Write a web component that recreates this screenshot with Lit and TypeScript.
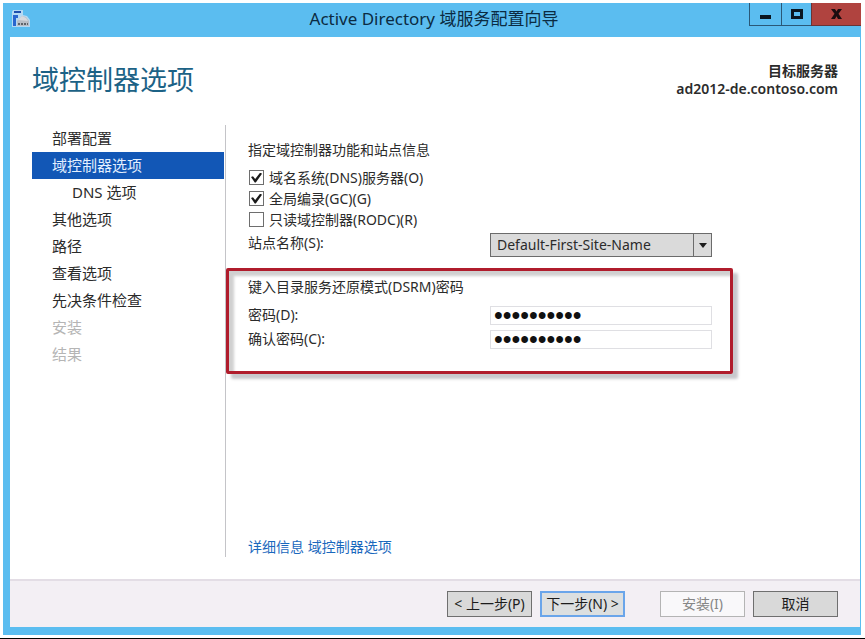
import { LitElement, html, css } from "lit";
import { customElement, property, state } from "lit/decorators.js";
import { classMap } from "lit/directives/class-map.js";

interface Step {
  label: string;
  sub?: boolean;
  current?: boolean;
  disabled?: boolean;
}

const STEPS: Step[] = [
  { label: "部署配置" },
  { label: "域控制器选项", current: true },
  { label: "DNS 选项", sub: true },
  { label: "其他选项" },
  { label: "路径" },
  { label: "查看选项" },
  { label: "先决条件检查" },
  { label: "安装", disabled: true },
  { label: "结果", disabled: true },
];

@customElement("window-bar")
class WindowBar extends LitElement {
  @property() caption = "";

  static styles = css`
    :host {
      display: grid;
      grid-template-columns: 116px 1fr 112px;
      height: 34px;
      background: #5bbdf0;
      color: #0b2b42;
    }
    .logo {
      margin: 6px 0 0 8px;
      width: 20px;
      height: 19px;
    }
    .caption {
      text-align: center;
      font-size: 17px;
      line-height: 32px;
      white-space: nowrap;
    }
    .controls {
      display: grid;
      grid-template-columns: 32px 30px 50px;
      height: 23px;
    }
    button {
      padding: 0;
      border: 0 solid #2a5877;
      border-width: 0 0 1px 1px;
      background: none;
    }
    button.close {
      background: #b0433f;
      border-color: #6a3436;
    }
    button svg {
      display: block;
      width: 16px;
      height: 14px;
      margin: 0 auto;
    }
  `;

  render() {
    return html`
      <svg class="logo" viewBox="0 0 20 19" aria-hidden="true">
        <path d="M2 1h10v5l4 1 3 4v7H1V3z" fill="#b5d9f3" />
        <path d="M3 2h7v2H3z" fill="#1d4fae" />
        <path d="M2 6h5v3H5v8H2z" fill="#2a66cf" />
        <path d="M6 12l5-5 4 1 3 4v5H6z" fill="#b9bec6" />
        <path d="M7 11l4-4 4 2 2 3z" fill="#d6d9de" />
        <path d="M7 15h10" stroke="#5f646b" stroke-width="2" stroke-dasharray="2 1" />
      </svg>
      <div class="caption">${this.caption}</div>
      <div class="controls">
        <button aria-label="最小化">
          <svg viewBox="0 0 16 14"><path d="M2 8h11v4H2z" fill="#0a1620" /></svg>
        </button>
        <button aria-label="最大化">
          <svg viewBox="0 0 16 14">
            <path d="M3.500 3.500h9v7h-9z" fill="none" stroke="#0a1620" stroke-width="3" />
          </svg>
        </button>
        <button class="close" aria-label="关闭">
          <svg viewBox="0 0 16 14">
            <path d="M2 2h4l1.500 2.500L9 2h4L9.500 6.800 13 12H9L7.500 9.300 6 12H2l3.500-5.200z" fill="#1c0d10" />
          </svg>
        </button>
      </div>
    `;
  }
}

@customElement("app-root")
class AppRoot extends LitElement {
  @state() private dns = true;
  @state() private catalog = true;
  @state() private readOnly = false;

  static styles = css`
    :host {
      display: flex;
      box-sizing: border-box;
      min-height: 100vh;
      padding: 3px 4px 3px 3px;
      background: #fff;
      border-bottom: 1px solid #000;
      font-family: "Noto Sans", "Noto Sans CJK SC", sans-serif;
      font-size: 14px;
      line-height: 20px;
      color: #2b2b2b;
    }
    * {
      box-sizing: border-box;
    }
    button,
    input,
    select {
      font: inherit;
      color: inherit;
      margin: 0;
    }
    .window {
      flex: 1;
      display: flex;
      flex-direction: column;
      background: #5bbdf0;
    }
    .client {
      flex: 1;
      display: flex;
      flex-direction: column;
      margin: 0 1px 8px 7px;
      background: #fff;
    }
    header {
      display: flex;
      justify-content: space-between;
      padding: 25px 22px 27px;
    }
    h1 {
      margin: 0;
      font-size: 27px;
      line-height: 36px;
      font-weight: 400;
      color: #1c6286;
    }
    .server {
      text-align: right;
      line-height: 18px;
      font-weight: 600;
    }
    .body {
      flex: 1;
      display: flex;
      padding: 0 22px 22px;
    }
    nav {
      width: 194px;
      border-right: 1px solid #c4c4c8;
    }
    ol {
      list-style: none;
      margin: 0 1px 0 0;
      padding: 0;
    }
    li {
      padding-left: 20px;
      font-size: 15px;
      line-height: 27px;
    }
    li.sub {
      padding-left: 40px;
    }
    li.current {
      background: #1257b6;
      color: #e3efff;
    }
    li.disabled {
      color: #b5b5b5;
    }
    form {
      flex: 1;
      display: flex;
      flex-direction: column;
      align-items: flex-start;
      padding-top: 15px;
    }
    .options,
    .more {
      padding-left: 22px;
    }
    p {
      margin: 0;
    }
    .checks {
      padding: 7px 0 3px;
    }
    .check {
      display: flex;
      align-items: center;
      gap: 5px;
      height: 21px;
    }
    .check input {
      appearance: none;
      display: grid;
      place-items: center;
      width: 15px;
      height: 15px;
      margin-left: 1px;
      border: 1px solid #6e6e6e;
      background: #fff;
    }
    .check input:checked::before {
      content: "";
      width: 11px;
      height: 10px;
      background: #1a1a1a;
      clip-path: polygon(0 45%, 18% 38%, 38% 66%, 84% 0, 100% 12%, 44% 100%, 34% 100%);
    }
    .row {
      display: grid;
      grid-template-columns: 242px 222px;
      height: 24px;
    }
    .combo {
      display: grid;
    }
    .combo > * {
      grid-area: 1 / 1;
    }
    select {
      appearance: none;
      padding: 0 24px 0 6px;
      border: 1px solid #6b6b6b;
      border-radius: 0;
      background: #dadada;
    }
    .arrow {
      justify-self: end;
      width: 19px;
      height: 24px;
      pointer-events: none;
    }
    fieldset {
      min-width: 0;
      margin: 11px 0 0;
      padding: 6px 18px 19px 19px;
      border: 3px solid #b01c2c;
      border-radius: 2px;
      box-shadow:
        5px 5px 3px #c8c8cc,
        inset 5px 5px 3px #d0d0d0;
    }
    .secrets {
      padding-top: 6px;
      padding-bottom: 1px;
    }
    .secrets .row {
      align-items: center;
    }
    .secrets input {
      width: 100%;
      height: 19px;
      padding: 0 3px;
      border: 1px solid #dfdfe3;
      background: #fff;
      color: #111;
      font-family: "Liberation Sans", sans-serif;
      font-size: 25px;
    }
    .more {
      margin-top: auto;
    }
    a {
      color: #1a68bd;
      text-decoration: none;
    }
    footer {
      display: flex;
      justify-content: flex-end;
      gap: 8px;
      padding: 10px 22px;
      border-top: 2px solid #e3dde5;
      background: #f3eff4;
    }
    footer button {
      width: 85px;
      height: 26px;
      padding: 0;
      border: 1px solid #6f6f6f;
      background: #d9d9d9;
      color: #1c1c1c;
      white-space: nowrap;
    }
    footer button.default {
      border: 2px solid #6aa5ea;
      background: #dcdfe0;
      margin-right: 27px;
    }
    footer button:disabled {
      border-color: #b4b4b4;
      background: #f9f8fa;
      color: #868686;
    }
  `;

  private check(label: string, on: boolean, set: (v: boolean) => void) {
    return html`<label class="check">
      <input
        type="checkbox"
        .checked=${on}
        @change=${(e: Event) => set((e.target as HTMLInputElement).checked)}
      />${label}
    </label>`;
  }

  render() {
    return html`
      <div class="window">
        <window-bar caption="Active Directory 域服务配置向导"></window-bar>
        <div class="client">
          <header>
            <h1>域控制器选项</h1>
            <div class="server">
              <div>目标服务器</div>
              <div>ad2012-de.contoso.com</div>
            </div>
          </header>
          <div class="body">
            <nav>
              <ol>
                ${STEPS.map(
                  (s) => html`<li
                    class=${classMap({ sub: !!s.sub, current: !!s.current, disabled: !!s.disabled })}
                    aria-current=${s.current ? "step" : "false"}
                  >
                    ${s.label}
                  </li>`
                )}
              </ol>
            </nav>
            <form @submit=${(e: Event) => e.preventDefault()}>
              <div class="options">
                <p>指定域控制器功能和站点信息</p>
                <div class="checks">
                  ${this.check("域名系统(DNS)服务器(O)", this.dns, (v) => (this.dns = v))}
                  ${this.check("全局编录(GC)(G)", this.catalog, (v) => (this.catalog = v))}
                  ${this.check("只读域控制器(RODC)(R)", this.readOnly, (v) => (this.readOnly = v))}
                </div>
                <div class="row">
                  <label for="site">站点名称(S):</label>
                  <div class="combo">
                    <select id="site">
                      <option>Default-First-Site-Name</option>
                    </select>
                    <svg class="arrow" viewBox="0 0 19 24" aria-hidden="true">
                      <path d="M0.500 1v22" stroke="#6b6b6b" />
                      <path d="M6 10h8l-4 5z" fill="#1c1c1c" />
                    </svg>
                  </div>
                </div>
              </div>
              <fieldset aria-labelledby="dsrm">
                <p id="dsrm">键入目录服务还原模式(DSRM)密码</p>
                <div class="secrets">
                  <div class="row">
                    <label for="pw">密码(D):</label>
                    <input id="pw" type="password" value="Passw0rd12" />
                  </div>
                  <div class="row">
                    <label for="pw2">确认密码(C):</label>
                    <input id="pw2" type="password" value="Passw0rd12" />
                  </div>
                </div>
              </fieldset>
              <div class="more"><a href="#more">详细信息 域控制器选项</a></div>
            </form>
          </div>
          <footer>
            <button>&lt; 上一步(P)</button>
            <button class="default">下一步(N) &gt;</button>
            <button disabled>安装(I)</button>
            <button>取消</button>
          </footer>
        </div>
      </div>
    `;
  }
}
